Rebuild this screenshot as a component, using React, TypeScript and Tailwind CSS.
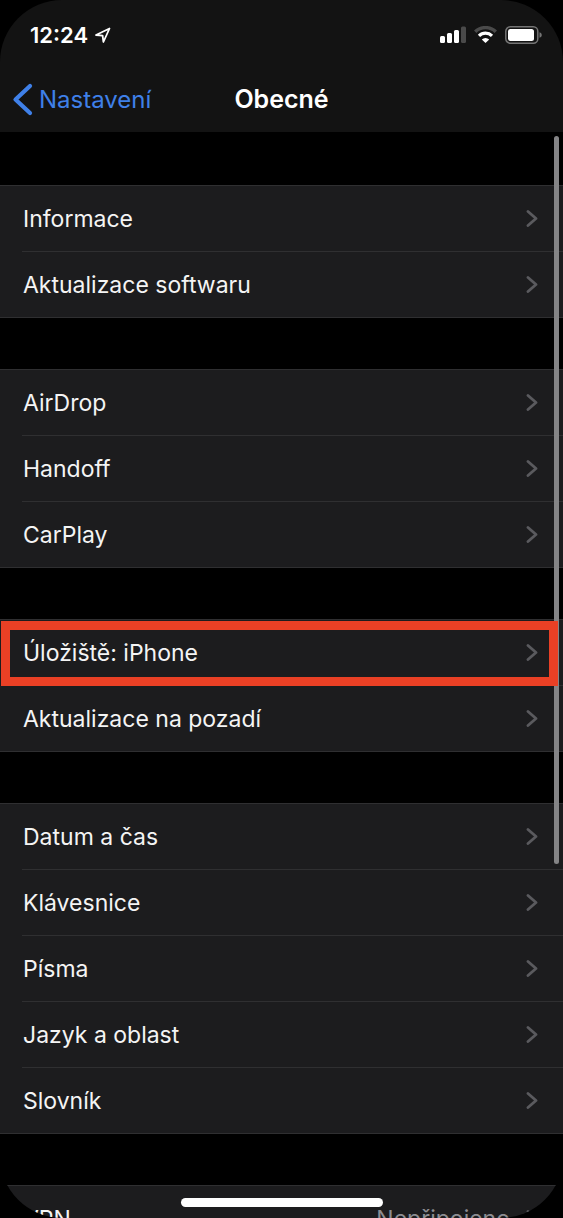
type Item = {
  label: string;
  value?: string;
  highlighted?: boolean;
};

const groups: Item[][] = [
  [{ label: "Informace" }, { label: "Aktualizace softwaru" }],
  [{ label: "AirDrop" }, { label: "Handoff" }, { label: "CarPlay" }],
  [
    { label: "Úložiště: iPhone", highlighted: true },
    { label: "Aktualizace na pozadí" },
  ],
  [
    { label: "Datum a čas" },
    { label: "Klávesnice" },
    { label: "Písma" },
    { label: "Jazyk a oblast" },
    { label: "Slovník" },
  ],
  [{ label: "VPN", value: "Nepřipojeno" }],
];

function LocationIcon() {
  return (
    <svg width="17" height="17" viewBox="0 0 17 17" fill="none" aria-hidden="true">
      <path
        d="M15.5 1.5 2 8 8.6 8.6 9.4 15Z"
        stroke="#fff"
        strokeWidth="1.8"
        strokeLinejoin="round"
      />
    </svg>
  );
}

function SignalIcon() {
  return (
    <svg width="26" height="18" viewBox="0 0 26 18" fill="#fff" aria-hidden="true">
      <rect x="0" y="10" width="5" height="7" rx="1.5" />
      <rect x="7" y="7" width="5" height="10" rx="1.5" />
      <rect x="14" y="4" width="5" height="13" rx="1.5" />
      <rect x="21" y="0.5" width="5" height="16.5" rx="1.5" fill="#4a4a4a" />
    </svg>
  );
}

function WifiIcon() {
  return (
    <svg width="23" height="18" viewBox="0 0 23 18" fill="none" aria-hidden="true">
      <path d="M1.2 5.8a14.7 14.7 0 0 1 20.6 0" stroke="#4a4a4a" strokeWidth="3.4" />
      <path d="M5 9.8a9.3 9.3 0 0 1 13 0" stroke="#fff" strokeWidth="3.2" />
      <path d="M11.5 17 7.8 13.4a5.3 5.3 0 0 1 7.4 0Z" fill="#fff" />
    </svg>
  );
}

function BatteryIcon() {
  return (
    <svg width="37" height="18" viewBox="0 0 37 18" fill="none" aria-hidden="true">
      <rect x="0.8" y="0.8" width="32" height="16.4" rx="4.5" stroke="#747474" strokeWidth="1.5" />
      <rect x="3" y="3" width="26" height="12" rx="2.5" fill="#fff" />
      <path d="M34.5 6.2c3 .8 3 4.8 0 5.6Z" fill="#747474" />
    </svg>
  );
}

function Chevron() {
  return (
    <svg className="shrink-0" width="12" height="18" viewBox="0 0 12 18" fill="none" aria-hidden="true">
      <path
        d="m2 1.5 8 7-8 7"
        stroke="#5a5a5e"
        strokeWidth="2.8"
        strokeLinecap="round"
        strokeLinejoin="round"
      />
    </svg>
  );
}

function Row({ label, value, highlighted }: Item) {
  return (
    <li className="group relative pl-[22px]">
      <a
        href="#"
        className="flex h-[66px] items-center gap-4 border-b border-[#2f2f31] pr-[25px] pl-px group-last:-ml-[22px] group-last:pl-[23px]"
      >
        <span className="flex-1 pt-0.5">{label}</span>
        {value && <span className="pt-0.5 text-[#8d8d92]">{value}</span>}
        <Chevron />
      </a>
      {highlighted && (
        <div className="pointer-events-none absolute top-px right-[5px] bottom-0 left-px z-20 border-[9px] border-[#ea4025]" />
      )}
    </li>
  );
}

export default function App() {
  return (
    <div className="h-screen bg-black font-['Inter',sans-serif] text-[23px] text-[#f4f4f4]">
      <div className="relative flex h-full flex-col overflow-hidden rounded-[62px]">
        <header className="h-[132px] shrink-0 bg-[#131313]">
          <div className="flex h-[70px] items-center justify-between pr-[21px] pl-[30px]">
            <div className="flex items-center gap-1.5">
              <time className="text-[22px] font-semibold text-white">12:24</time>
              <LocationIcon />
            </div>
            <div className="flex items-center gap-2">
              <SignalIcon />
              <WifiIcon />
              <BatteryIcon />
            </div>
          </div>
          <nav className="grid h-[60px] grid-cols-[1fr_auto_1fr] items-center px-3">
            <a href="#" className="flex items-center gap-1.5 text-2xl text-[#3f80e8]">
              <svg width="21" height="34" viewBox="0 0 21 34" fill="none" aria-hidden="true">
                <path
                  d="M18 3 3.5 16.5 18 30"
                  stroke="currentColor"
                  strokeWidth="4.2"
                  strokeLinecap="round"
                  strokeLinejoin="round"
                />
              </svg>
              Nastavení
            </a>
            <h1 className="text-[25px] font-semibold text-white">Obecné</h1>
          </nav>
        </header>

        <main className="relative flex-1 overflow-hidden">
          <div className="flex flex-col gap-[51px] pt-[53px]">
            {groups.map((items) => (
              <ul key={items[0].label} className="border-t border-[#2f2f31] bg-[#1c1c1e]">
                {items.map((item) => (
                  <Row key={item.label} {...item} />
                ))}
              </ul>
            ))}
          </div>
          <div className="absolute top-1 right-1 z-10 h-[67%] w-[5px] rounded-full bg-[#848486]" />
        </main>

        <div className="absolute bottom-[11px] left-1/2 z-30 h-[9px] w-[202px] -translate-x-1/2 rounded-full bg-white" />
      </div>
    </div>
  );
}
